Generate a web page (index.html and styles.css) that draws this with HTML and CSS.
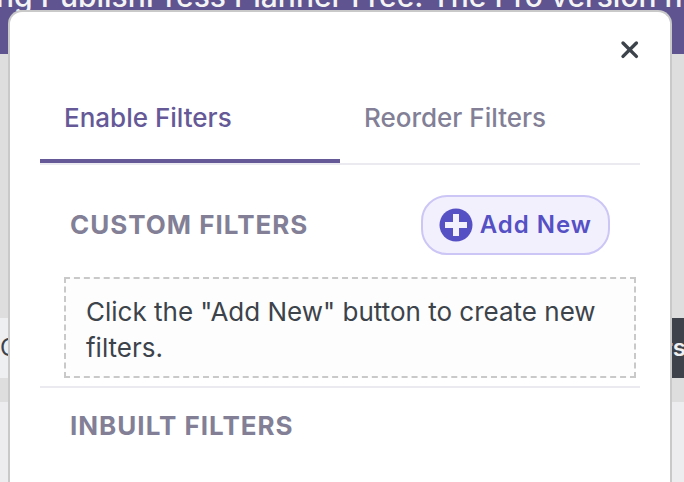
FILE: index.html
```
<!doctype html>
<html lang="en">
<head>
	<meta charset="UTF-8">
	<meta name="viewport" content="width=device-width, initial-scale=1">
	<title>Filters</title>
	<link rel="stylesheet" href="styles.css">
</head>
<body>

<div class="page">
	<header class="banner">
		<p class="banner__text">ng PublishPress Planner Free. The Pro version h</p>
	</header>
	<div class="toolbar">
		<button class="toolbar__btn" type="button">C</button>
		<button class="toolbar__btn toolbar__btn--dark" type="button">rs</button>
	</div>
	<div class="board"></div>
</div>

<div class="modal" role="dialog" aria-label="Filters">
	<div class="modal__top">
		<button class="modal__close" type="button" aria-label="Close">
			<svg width="20" height="20" viewBox="0 0 20 20">
				<path d="M3 3l13.4 13.4M16.4 3L3 16.4" fill="none" stroke="currentColor" stroke-width="3.4" stroke-linecap="round"/>
			</svg>
		</button>
	</div>

	<div class="tabs" role="tablist">
		<button class="tabs__item is-active" type="button" role="tab" aria-selected="true">Enable Filters</button>
		<button class="tabs__item" type="button" role="tab" aria-selected="false">Reorder Filters</button>
	</div>

	<section class="filters">
		<div class="filters__head">
			<h2 class="filters__title">CUSTOM FILTERS</h2>
			<button class="add-new" type="button">
				<svg class="add-new__icon" width="34" height="34" viewBox="0 0 34 34">
					<circle cx="17" cy="17" r="16.5" fill="#5650c5"/>
					<path d="M14 6h6v8h8v6h-8v8h-6v-8H6v-6h8z" fill="#f3f0fe"/>
				</svg>
				Add New
			</button>
		</div>
		<p class="filters__empty">Click the "Add New" button to create new filters.</p>
	</section>

	<section class="filters">
		<div class="filters__head">
			<h2 class="filters__title">INBUILT FILTERS</h2>
		</div>
	</section>
</div>

</body>
</html>
```

FILE: styles.css
```
* {
	margin: 0;
	padding: 0;
	box-sizing: border-box;
}
body {
	height: 100vh;
	overflow: hidden;
	color: #3c434a;
	font-family: Inter, 'Liberation Sans', sans-serif;
	font-size: 26px;
	line-height: 36px;
}
button {
	border: 0;
	background: none;
	color: inherit;
	font: inherit;
	cursor: pointer;
}

/* page behind the dialog */
.page {
	display: flex;
	flex-direction: column;
	height: 100%;
	background-color: #dedede;
}
.banner {
	height: 54px;
	flex-shrink: 0;
	overflow: hidden;
	background-color: #5f5490;
}
.banner__text {
	margin-top: -22px;
	margin-left: -4px;
	color: #f4f4f4;
	font-size: 30px;
	font-weight: 500;
	white-space: nowrap;
}
.toolbar {
	display: flex;
	justify-content: space-between;
	margin-top: 264px;
	margin-right: -2px;
}
.toolbar__btn {
	width: 100px;
	height: 60px;
	background-color: #eeeff1;
	font-size: 24px;
	text-align: left;
}
.toolbar__btn--dark {
	background-color: #3e424b;
	color: #f0f0f1;
	font-weight: 600;
	text-align: right;
}
.board {
	flex: 1;
	margin-top: 24px;
	background-color: #ededf0;
}

/* dialog */
.modal {
	position: absolute;
	top: 10px;
	right: 12px;
	bottom: 0;
	left: 8px;
	padding: 0 30px;
	border: 2px solid #c9c9c9;
	border-bottom: 0;
	border-radius: 14px 14px 0 0;
	background-color: #fff;
}
.modal__top {
	display: flex;
	justify-content: flex-end;
	padding-top: 28px;
}
.modal__close {
	display: flex;
}
.tabs {
	display: flex;
	margin-top: 13px;
	border-bottom: 2px solid #ebeaf0;
}
.tabs__item {
	flex: 1;
	height: 90px;
	padding: 4px 24px 0;
	border-bottom: 4px solid transparent;
	color: #827f96;
	font-weight: 500;
	text-align: left;
}
.tabs__item.is-active {
	border-bottom-color: #655997;
	color: #655997;
}
.filters {
	padding-bottom: 8px;
	border-bottom: 2px solid #ebeaf0;
}
.filters:last-child {
	border-bottom: 0;
}
.filters__head {
	display: flex;
	align-items: center;
	justify-content: space-between;
	padding: 20px 30px 0;
}
.filters__head:first-child:not(:last-child) {
	padding-top: 30px;
}
.filters__title {
	color: #827f96;
	font-size: 26px;
	font-weight: 700;
	letter-spacing: 1px;
}
.filters__empty {
	margin: 22px 4px 0 24px;
	padding: 15px 20px 10px;
	border: 2px dashed #c9c9c9;
	background-color: #fdfdfd;
}
.add-new {
	display: flex;
	align-items: center;
	gap: 7px;
	height: 60px;
	padding: 0 16px;
	border: 2px solid #cbc6f5;
	border-radius: 26px;
	background-color: #f3f0fe;
	color: #5650c5;
	font-size: 24px;
	font-weight: 600;
	letter-spacing: 1px;
}
```
